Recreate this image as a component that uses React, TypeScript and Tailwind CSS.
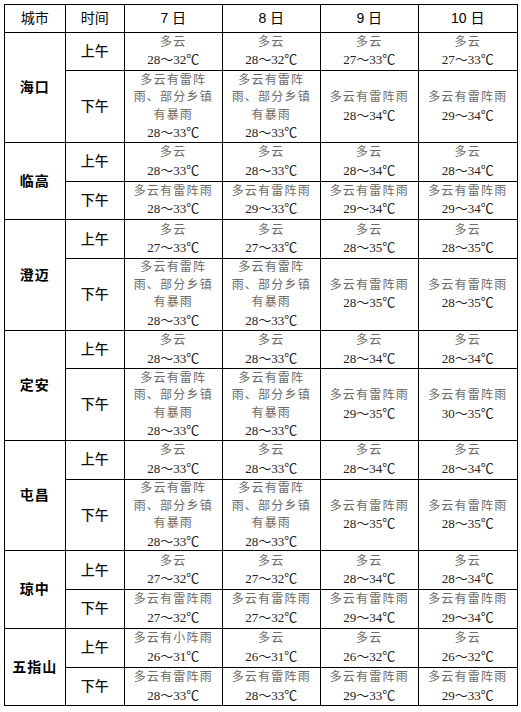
import { Fragment } from 'react'

const LONG = ['多云有雷阵', '雨、部分乡镇', '有暴雨']

type Cell = { w: string[]; t: string }
type Half = { label: string; big?: boolean; cells: Cell[] }
type City = { name: string; am: Half; pm: Half }

const c = (w: string | string[], t: string): Cell => ({ w: Array.isArray(w) ? w : [w], t })

const CITIES: City[] = [
  {
    name: '海口',
    am: { label: '上午', cells: [c('多云', '28～32'), c('多云', '28～32'), c('多云', '27～33'), c('多云', '27～33')] },
    pm: { label: '下午', big: true, cells: [c(LONG, '28～33'), c(LONG, '28～33'), c('多云有雷阵雨', '28～34'), c('多云有雷阵雨', '29～34')] },
  },
  {
    name: '临高',
    am: { label: '上午', cells: [c('多云', '28～33'), c('多云', '28～33'), c('多云', '28～34'), c('多云', '28～34')] },
    pm: { label: '下午', cells: [c('多云有雷阵雨', '28～33'), c('多云有雷阵雨', '29～33'), c('多云有雷阵雨', '29～34'), c('多云有雷阵雨', '29～34')] },
  },
  {
    name: '澄迈',
    am: { label: '上午', cells: [c('多云', '27～33'), c('多云', '27～33'), c('多云', '28～35'), c('多云', '28～35')] },
    pm: { label: '下午', big: true, cells: [c(LONG, '28～33'), c(LONG, '28～33'), c('多云有雷阵雨', '28～35'), c('多云有雷阵雨', '28～35')] },
  },
  {
    name: '定安',
    am: { label: '上午', cells: [c('多云', '28～33'), c('多云', '28～33'), c('多云', '28～34'), c('多云', '28～34')] },
    pm: { label: '下午', big: true, cells: [c(LONG, '28～33'), c(LONG, '28～33'), c('多云有雷阵雨', '29～35'), c('多云有雷阵雨', '30～35')] },
  },
  {
    name: '屯昌',
    am: { label: '上午', cells: [c('多云', '28～33'), c('多云', '28～33'), c('多云', '28～34'), c('多云', '28～34')] },
    pm: { label: '下午', big: true, cells: [c(LONG, '28～33'), c(LONG, '28～33'), c('多云有雷阵雨', '28～35'), c('多云有雷阵雨', '28～35')] },
  },
  {
    name: '琼中',
    am: { label: '上午', cells: [c('多云', '27～32'), c('多云', '27～32'), c('多云', '28～34'), c('多云', '28～34')] },
    pm: { label: '下午', cells: [c('多云有雷阵雨', '27～32'), c('多云有雷阵雨', '27～32'), c('多云有雷阵雨', '29～34'), c('多云有雷阵雨', '29～34')] },
  },
  {
    name: '五指山',
    am: { label: '上午', cells: [c('多云有小阵雨', '26～31'), c('多云', '26～31'), c('多云', '26～32'), c('多云', '26～32')] },
    pm: { label: '下午', cells: [c('多云有雷阵雨', '28～33'), c('多云有雷阵雨', '28～33'), c('多云有雷阵雨', '29～33'), c('多云有雷阵雨', '29～33')] },
  },
]

const td = 'border border-black p-0 text-center align-middle'

function WeatherCell({ cell }: { cell: Cell }) {
  return (
    <td className={td}>
      {cell.w.map(line => (
        <div key={line} className="text-[12px] tracking-[1.2px] text-[#6e6a66] leading-[17.5px]">{line}</div>
      ))}
      <div className="text-[13px] text-[#222] leading-[17.5px]">{cell.t}℃</div>
    </td>
  )
}

function HalfRow({ half, city }: { half: Half; city?: string }) {
  return (
    <tr className={half.big ? 'h-[71.5px]' : 'h-[38.8px]'}>
      {city && (
        <td rowSpan={2} className={`${td} text-[14px] font-bold text-black tracking-[1px]`}>{city}</td>
      )}
      <td className={`${td} text-[14px] text-[#111] font-medium`}>{half.label}</td>
      {half.cells.map((cell, i) => <WeatherCell key={i} cell={cell} />)}
    </tr>
  )
}

export default function App() {
  return (
    <div className="bg-white w-[521px] h-[712px] pt-[4px] pl-[3.5px]" style={{ fontFamily: '"Liberation Serif", "Noto Sans CJK SC", serif' }}>
      <table className="border-collapse table-fixed w-[513.5px]">
        <colgroup>
          <col className="w-[61.5px]" />
          <col className="w-[58.5px]" />
          <col className="w-[98.5px]" />
          <col className="w-[97.5px]" />
          <col className="w-[98.5px]" />
          <col className="w-[98.5px]" />
        </colgroup>
        <thead>
          <tr className="h-[27.5px]" style={{ fontFamily: '"Liberation Sans", "Noto Sans CJK SC", sans-serif' }}>
            <th className={`${td} text-[14px] font-normal`}>城市</th>
            <th className={`${td} text-[14px] font-normal`}>时间</th>
            <th className={`${td} text-[14px] font-normal`}>7 日</th>
            <th className={`${td} text-[14px] font-normal`}>8 日</th>
            <th className={`${td} text-[14px] font-normal`}>9 日</th>
            <th className={`${td} text-[14px] font-normal`}>10 日</th>
          </tr>
        </thead>
        <tbody>
          {CITIES.map(city => (
            <Fragment key={city.name}>
              <HalfRow half={city.am} city={city.name} />
              <HalfRow half={city.pm} />
            </Fragment>
          ))}
        </tbody>
      </table>
    </div>
  )
}
